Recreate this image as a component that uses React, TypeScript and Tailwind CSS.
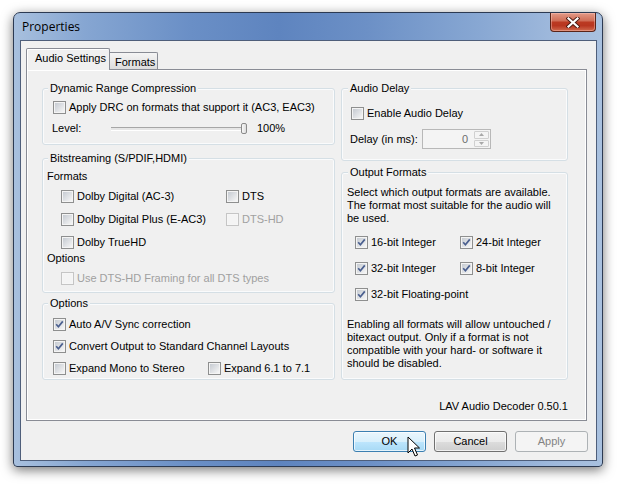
import clsx from 'clsx';

function Box({ checked, disabled }: { checked?: boolean; disabled?: boolean }) {
  return (
    <span
      className={clsx(
        'flex h-[13px] w-[13px] shrink-0 border p-[1px]',
        disabled ? 'border-[#c5c5c5] bg-[#f6f6f6]' : 'border-[#8e8f8f] bg-[#f4f4f4]'
      )}
    >
      <span
        className={clsx(
          'flex flex-1 items-center justify-center',
          disabled ? 'bg-[#f4f4f4]' : 'bg-gradient-to-br from-[#c6cbd2] to-[#f6f6f6]'
        )}
      >
        {checked && (
          <svg width="9" height="9" viewBox="0 0 9 9">
            <polyline points="1.2,4.3 3.4,6.8 7.8,1.4" fill="none" stroke="#4a5f8f" strokeWidth="1.7" />
          </svg>
        )}
      </span>
    </span>
  );
}

function Cb({ label, checked, disabled, className }: { label: string; checked?: boolean; disabled?: boolean; className?: string }) {
  return (
    <div className={clsx('flex h-[16px] items-center gap-[3px] whitespace-nowrap', className)}>
      <Box checked={checked} disabled={disabled} />
      <span className={disabled ? 'text-[#a0a0a0]' : 'text-black'}>{label}</span>
    </div>
  );
}

function Group({ title, className, titleClass, children }: { title: string; className?: string; titleClass?: string; children?: React.ReactNode }) {
  return (
    <div className={clsx('rounded-[3px] border border-[#d5dfe5] shadow-[inset_0_0_0_1px_#fafbfc]', className)}>
      <div className={clsx('-mt-[7px] w-fit bg-[#f0f0f0] px-[2px] leading-[13px]', titleClass ?? 'ml-[5px]')}>{title}</div>
      {children}
    </div>
  );
}

function Btn({ label, kind }: { label: string; kind: 'hover' | 'normal' | 'disabled' }) {
  return (
    <div
      className={clsx(
        'flex h-[21px] w-[73px] items-center justify-center rounded-[3px] border',
        kind === 'hover' &&
          'border-[#3c7fb1] bg-[linear-gradient(#eaf6fd_0%,#d9f0fc_50%,#bee6fd_50%,#a7d9f5_100%)] shadow-[inset_0_0_0_1px_rgba(255,255,255,0.7)]',
        kind === 'normal' &&
          'border-[#707070] bg-[linear-gradient(#f2f2f2_0%,#ebebeb_50%,#dddddd_50%,#cfcfcf_100%)] shadow-[inset_0_0_0_1px_rgba(255,255,255,0.7)]',
        kind === 'disabled' && 'border-[#adb2b5] bg-[#f4f4f4] text-[#838383]'
      )}
    >
      {label}
    </div>
  );
}

export default function App() {
  return (
    <div className="relative h-[487px] w-[621px] overflow-hidden bg-white pl-[13px] pt-[12px] font-['Liberation_Sans',Arial,sans-serif] text-[11px] leading-[13px] text-black">
      {/* window */}
      <div className="flex h-[455px] w-[590px] flex-col rounded-b-[4px] rounded-t-[7px] border border-[#2c3a52] bg-[linear-gradient(90deg,#a8c0de_0%,#86a6d2_12%,#6a8fc6_30%,#5e84bf_45%,#6c90c6_60%,#86a6d2_78%,#9fb9dc_92%,#a9c1df_100%)] shadow-[0_3px_12px_rgba(0,0,0,0.55)]">
        {/* title bar */}
        <div className="flex h-[27px] shrink-0 items-start justify-between">
          <span className="mt-[7px] pl-[8px] font-['Open_Sans',sans-serif] text-[12px] leading-[14px] text-black">Properties</span>
          <div className="mr-[6px] flex h-[19px] w-[46px] items-center justify-center rounded-b-[4px] border border-t-0 border-[#5a2418] bg-[linear-gradient(#e39a88_0%,#d06f58_42%,#bb3a22_52%,#b83620_70%,#d06a4e_100%)] shadow-[inset_0_0_0_1px_rgba(255,210,200,0.4)]">
            <svg width="14" height="11" viewBox="0 0 14 11">
              <path d="M2.5 1.5 L11.5 9.5 M11.5 1.5 L2.5 9.5" stroke="#4a1a12" strokeWidth="4" strokeLinecap="square" />
              <path d="M2.5 1.5 L11.5 9.5 M11.5 1.5 L2.5 9.5" stroke="#ffffff" strokeWidth="2.2" strokeLinecap="square" />
            </svg>
          </div>
        </div>

        {/* client area */}
        <div className="ml-[6px] flex h-[421px] w-[577px] flex-col border border-[#4e5e7a] bg-[#f0f0f0] pt-[7px]">
          {/* tabs */}
          <div className="ml-[5px] flex h-[21px] items-end">
            <div className="relative z-10 -mb-px flex h-[22px] w-[84px] items-start rounded-t-[2px] border border-b-0 border-[#898c95] bg-[#f0f0f0] pl-[8px] pt-[3px] shadow-[inset_1px_1px_0_#ffffff]">
              Audio Settings
            </div>
            <div className="flex h-[17px] w-[48px] items-start rounded-tr-[2px] border border-b-0 border-l-0 border-[#898c95] bg-[linear-gradient(#f5f5f5,#dcdcdc)] pl-[5px] pt-[3px]">
              Formats
            </div>
          </div>

          {/* tab panel */}
          <div className="ml-[5px] h-[352px] w-[561px] border border-[#898c95] bg-[#f0f0f0] pl-[15px] pt-[18px] shadow-[inset_1px_1px_0_#ffffff,inset_-1px_-1px_0_#ffffff]">
            <div className="flex gap-[6px]">
              {/* left column */}
              <div className="flex w-[293px] flex-col">
                <Group title="Dynamic Range Compression" className="h-[57px]">
                  <Cb className="ml-[10px] mt-[4px]" label="Apply DRC on formats that support it (AC3, EAC3)" />
                  <div className="ml-[9px] mt-[5px] flex h-[16px] items-center">
                    <span className="w-[59px]">Level:</span>
                    <div className="flex w-[136px] items-center">
                      <div className="h-[3px] flex-1 border-t border-[#a6a6a6] bg-[#e6e6e6] shadow-[0_1px_0_#ffffff]" />
                      <div className="-ml-[4px] h-[11px] w-[6px] rounded-[2px] border border-[#8a8a8a] bg-[linear-gradient(90deg,#f8f8f8,#dcdcdc)]" />
                    </div>
                    <span className="ml-[10px]">100%</span>
                  </div>
                </Group>

                <Group title="Bitstreaming (S/PDIF,HDMI)" className="mt-[13px] h-[135px]">
                  <div className="ml-[4px] mt-[3px] flex h-[16px] items-center">Formats</div>
                  <div className="ml-[18px] mt-[4px] grid grid-cols-[165px_1fr] gap-y-[7px]">
                    <Cb label="Dolby Digital (AC-3)" />
                    <Cb label="DTS" />
                    <Cb label="Dolby Digital Plus (E-AC3)" />
                    <Cb label="DTS-HD" disabled />
                    <Cb label="Dolby TrueHD" />
                  </div>
                  <div className="ml-[4px] flex h-[16px] items-center">Options</div>
                  <Cb className="ml-[18px] mt-[4px]" label="Use DTS-HD Framing for all DTS types" disabled />
                </Group>

                <Group title="Options" className="mt-[10px] h-[77px]">
                  <div className="ml-[10px] mt-[6px] flex flex-col gap-[6px]">
                    <Cb label="Auto A/V Sync correction" checked />
                    <Cb label="Convert Output to Standard Channel Layouts" checked />
                    <div className="grid grid-cols-[155px_1fr]">
                      <Cb label="Expand Mono to Stereo" />
                      <Cb label="Expand 6.1 to 7.1" />
                    </div>
                  </div>
                </Group>
              </div>

              {/* right column */}
              <div className="flex w-[227px] flex-col">
                <Group title="Audio Delay" className="h-[73px]" titleClass="ml-[6px]">
                  <Cb className="ml-[9px] mt-[10px]" label="Enable Audio Delay" />
                  <div className="ml-[8px] mt-[8px] flex h-[20px] items-center">
                    <span className="w-[72px]">Delay (in ms):</span>
                    <div className="flex h-[20px] w-[69px] border border-[#b8b8b8] bg-[#f4f4f4]">
                      <span className="flex flex-1 items-center justify-end pr-[6px] text-[#6d6d6d]">0</span>
                      <div className="flex w-[16px] flex-col gap-px py-px pr-px">
                        <div className="flex flex-1 items-center justify-center rounded-[1px] border border-[#d0d0d0] bg-[#f4f4f4]">
                          <svg width="5" height="3" viewBox="0 0 5 3"><path d="M0 3 L2.5 0 L5 3 Z" fill="#a8a8a8" /></svg>
                        </div>
                        <div className="flex flex-1 items-center justify-center rounded-[1px] border border-[#d0d0d0] bg-[#f4f4f4]">
                          <svg width="5" height="3" viewBox="0 0 5 3"><path d="M0 0 L2.5 3 L5 0 Z" fill="#a8a8a8" /></svg>
                        </div>
                      </div>
                    </div>
                  </div>
                </Group>

                <Group title="Output Formats" className="mt-[11px] h-[208px]" titleClass="ml-[6px]">
                  <p className="ml-[5px] mt-[7px] w-[215px]">
                    Select which output formats are available. The format most suitable for the audio will be used.
                  </p>
                  <div className="ml-[13px] mt-[9px] grid grid-cols-[105px_1fr] gap-y-[10px]">
                    <Cb label="16-bit Integer" checked />
                    <Cb label="24-bit Integer" checked />
                    <Cb label="32-bit Integer" checked />
                    <Cb label="8-bit Integer" checked />
                    <Cb className="col-span-2" label="32-bit Floating-point" checked />
                  </div>
                  <p className="ml-[5px] mt-[16px] w-[215px]">
                    Enabling all formats will allow untouched / bitexact output. Only if a format is not compatible with your hard- or software it should be disabled.
                  </p>
                </Group>

                <div className="mt-[20px] text-right">LAV Audio Decoder 0.50.1</div>
              </div>
            </div>
          </div>

          {/* buttons */}
          <div className="mr-[8px] mt-[10px] flex justify-end gap-[8px]">
            <Btn label="OK" kind="hover" />
            <Btn label="Cancel" kind="normal" />
            <Btn label="Apply" kind="disabled" />
          </div>
        </div>
      </div>

      {/* mouse pointer */}
      <svg className="absolute left-[407px] top-[436px]" width="14" height="22" viewBox="0 0 14 22">
        <path d="M1 1 L1 17 L5 13 L8 20 L10.5 19 L7.5 12 L12.5 12 Z" fill="#ffffff" stroke="#000000" strokeWidth="1" strokeLinejoin="round" />
      </svg>
    </div>
  );
}
